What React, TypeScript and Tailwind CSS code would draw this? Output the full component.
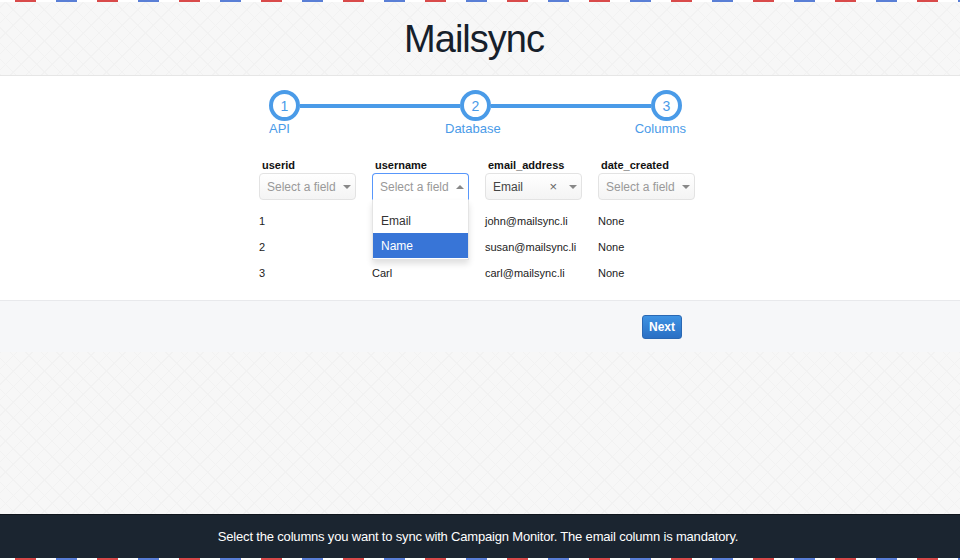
import clsx from 'clsx';

const pattern =
  'bg-[#f7f7f7] bg-[repeating-linear-gradient(45deg,#f2f2f2_0_1px,transparent_1px_11px),repeating-linear-gradient(-45deg,#f2f2f2_0_1px,transparent_1px_11px)]';

const stripes =
  'h-[2px] bg-[repeating-linear-gradient(90deg,#ffffff_0_15px,#d94a4a_15px_36px,#ffffff_36px_56px,#5a7fd6_56px_77px,#ffffff_77px_82px)]';

const columns = ['userid', 'username', 'email_address', 'date_created'];

// username values for rows 1-2 sit under the open dropdown
const rows = [
  ['1', '', 'john@mailsync.li', 'None'],
  ['2', '', 'susan@mailsync.li', 'None'],
  ['3', 'Carl', 'carl@mailsync.li', 'None'],
];

function Step({ n }: { n: number }) {
  return (
    <div className="flex h-[31px] w-[31px] shrink-0 items-center justify-center rounded-full border-[4px] border-[#4a9be8] bg-white text-[14px] leading-none text-[#4a9be8]">
      {n}
    </div>
  );
}

function Caret({ up }: { up?: boolean }) {
  return (
    <span
      className={clsx(
        'h-0 w-0 border-x-[4px] border-x-transparent',
        up ? 'border-b-[4px] border-b-[#888]' : 'border-t-[4px] border-t-[#888]'
      )}
    />
  );
}

function FieldSelect({ value, open }: { value?: string; open?: boolean }) {
  return (
    <div
      className={clsx(
        'relative mt-[1px] flex h-[27px] w-[97px] items-center border pl-[7px] pr-[4px] text-[12px]',
        open
          ? 'z-10 rounded-t-[4px] border-[#5897fb] border-b-white bg-white'
          : 'rounded-[4px] border-[#e3e3e3] bg-linear-to-b from-white to-[#f4f4f4]'
      )}
    >
      <span className={clsx('flex-1 truncate', value ? 'text-[#444]' : 'text-[#999]')}>
        {value ?? 'Select a field'}
      </span>
      {value && <span className="mr-[12px] text-[13px] leading-none text-[#666]">×</span>}
      <Caret up={open} />
      {open && (
        <div className="absolute left-[-1px] top-[26px] w-[97px] border border-t-0 border-[#e4e4e4] bg-white pb-[1px] pt-[8px] text-[12px] shadow-[0_4px_6px_rgba(0,0,0,0.12)]">
          <div className="flex h-[25px] items-center px-[8px] text-[#333]">Email</div>
          <div className="flex h-[25px] items-center bg-[#3875d7] px-[8px] text-white">Name</div>
        </div>
      )}
    </div>
  );
}

export default function App() {
  return (
    <div className="flex h-[560px] w-[960px] flex-col overflow-hidden font-['Liberation_Sans',Arial,sans-serif]">
      <div className={stripes} />
      <header
        className={clsx(
          'flex h-[74px] items-center justify-center border-b border-[#e6e6e6] pr-[12px]',
          pattern
        )}
      >
        <h1 className="text-[38px] leading-none tracking-[-1px] text-[#16202b]">Mailsync</h1>
      </header>

      <section className="h-[224px] bg-white pt-[14px]">
        <div className="ml-[269px] w-[413px]">
          <div className="flex items-center">
            <Step n={1} />
            <div className="h-[4px] flex-1 bg-[#4a9be8]" />
            <Step n={2} />
            <div className="h-[4px] flex-1 bg-[#4a9be8]" />
            <Step n={3} />
          </div>
        </div>
        <div className="ml-[269px] flex w-[417px] text-[13px] leading-[15px] text-[#4a9be8]">
          <span className="w-[176px]">API</span>
          <span>Database</span>
          <span className="ml-auto">Columns</span>
        </div>

        <div className="ml-[259px] mt-[23px] grid w-[452px] grid-cols-[repeat(4,113px)]">
          {columns.map((c, i) => (
            <div key={c} className="flex flex-col">
              <span className="pl-[3px] text-[11px] font-bold leading-[13px] text-[#111]">{c}</span>
              <FieldSelect value={i === 2 ? 'Email' : undefined} open={i === 1} />
            </div>
          ))}
        </div>

        <div className="ml-[259px] mt-[8px] w-[452px]">
          {rows.map((r) => (
            <div key={r[0]} className="grid h-[26px] grid-cols-[repeat(4,113px)] items-center text-[11px] text-[#222]">
              {r.map((v, j) => (
                <span key={j}>{v}</span>
              ))}
            </div>
          ))}
        </div>
      </section>

      <div className="h-[52px] border-t border-[#e8e9ec] bg-[#f6f7f9] pt-[13px] shadow-[0_2px_3px_rgba(0,0,0,0.06)]">
        <button className="ml-[642px] h-[24px] w-[40px] rounded-[3px] border border-[#2a68b3] bg-linear-to-b from-[#3f93e3] to-[#2a6fc4] text-[12px] font-bold text-white">
          Next
        </button>
      </div>

      <div className={clsx('flex-1', pattern)} />

      <footer className="flex h-[44px] items-center justify-center border-t border-[#0f151c] bg-[#1b2530] pr-[4px] text-[13px] tracking-[-0.18px] text-white">
        Select the columns you want to sync with Campaign Monitor. The email column is mandatory.
      </footer>
      <div className={stripes} />
    </div>
  );
}
